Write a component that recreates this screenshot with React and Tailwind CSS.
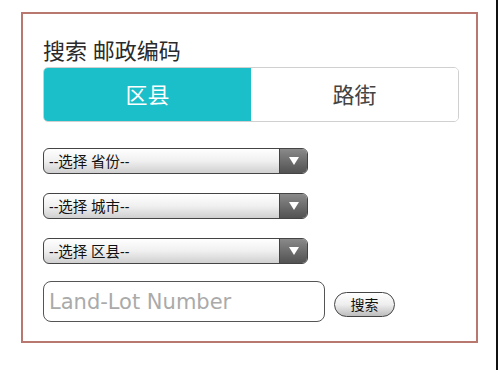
import { useState } from 'react';

const SELECTS = ['--选择 省份--', '--选择 城市--', '--选择 区县--'];

function FakeSelect({ label }) {
  return (
    <div className="flex h-[26px] w-[265px] overflow-hidden rounded-[6px] border border-[#444] bg-gradient-to-b from-white via-[#f0f0f0] to-[#d0d0d0]">
      <span className="flex-1 pl-[5px] text-[14.5px] leading-[24px] text-[#111]">{label}</span>
      <span className="flex w-[28px] items-center justify-center border-l border-[#444] bg-gradient-to-b from-[#8a8a8a] to-[#525252]">
        <svg width="10" height="8" viewBox="0 0 10 8">
          <path d="M0 0 L10 0 L5 8 Z" fill="#fff" />
        </svg>
      </span>
    </div>
  );
}

export default function App() {
  const [tab, setTab] = useState('district');

  return (
    <div className="h-[370px] w-[498px] border-r-2 border-[#111] bg-white pl-[21px] pt-[12px] font-['Noto_Sans','Noto_Sans_CJK_SC',sans-serif]">
      <div className="h-[331px] w-[457px] border-2 border-[#b8776f] pl-[20px] pr-[17px] pt-[21px]">
        <h1 className="text-[22px] leading-[30px] text-[#2a2a2a]">搜索 邮政编码</h1>

        {/* tabs */}
        <div className="mt-[2px] flex h-[55px] overflow-hidden rounded-[5px] border border-[#d0d0d0]">
          <button
            onClick={() => setTab('district')}
            className={`flex-1 text-[22px] ${tab === 'district' ? 'bg-[#1bbfc9] text-white' : 'bg-white text-[#444]'}`}
          >
            区县
          </button>
          <button
            onClick={() => setTab('street')}
            className={`flex-1 text-[22px] ${tab === 'street' ? 'bg-[#1bbfc9] text-white' : 'bg-white text-[#444]'}`}
          >
            路街
          </button>
        </div>

        {/* selects */}
        <div className="mt-[26px] flex flex-col gap-[19px]">
          {SELECTS.map(s => <FakeSelect key={s} label={s} />)}
        </div>

        {/* lot number + search */}
        <div className="mt-[17px] flex items-end gap-[9px]">
          <input
            placeholder="Land-Lot Number"
            className="h-[41px] w-[282px] rounded-[8px] border-[1.5px] border-[#555] px-[5px] font-['DejaVu_Sans',sans-serif] text-[21px] text-[#333] placeholder:text-[#aaa] outline-none"
          />
          <button className="mb-[5px] h-[25px] w-[61px] rounded-full border border-[#444] bg-gradient-to-b from-white via-[#eee] to-[#bdbdbd] text-[14px] leading-none text-[#111]">
            搜索
          </button>
        </div>
      </div>
    </div>
  );
}
